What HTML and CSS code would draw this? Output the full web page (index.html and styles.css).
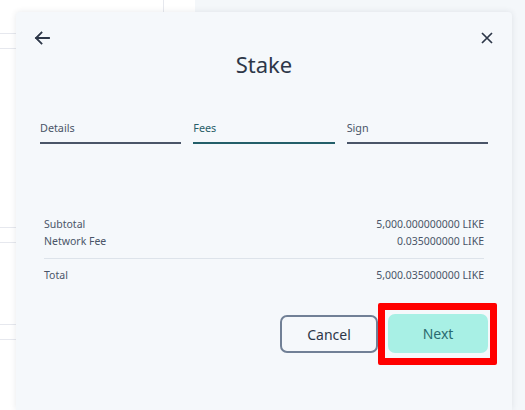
FILE: index.html
```html
<!DOCTYPE html>
<html>
<head>
<meta charset="utf-8">
<link rel="stylesheet" href="styles.css">
</head>
<body>
<div class="app">
  <div class="sidebar">
    <div class="band band-1"></div>
    <div class="band band-2"></div>
    <div class="band band-3"></div>
  </div>
  <div class="gutter"></div>
  <div class="main"></div>
</div>

<div class="modal">
  <div class="modal-head">
    <svg class="icon" width="16" height="14" viewBox="0 0 16 14"><path d="M15 7H2M7.5 1.5L2 7l5.5 5.5" fill="none" stroke="#2d3748" stroke-width="1.8" stroke-linecap="square"/></svg>
    <svg class="icon" width="14" height="14" viewBox="0 0 14 14"><path d="M2 2l10 10M12 2L2 12" fill="none" stroke="#2d3748" stroke-width="1.7"/></svg>
  </div>
  <h1 class="title">Stake</h1>
  <div class="tabs">
    <div class="tab">Details</div>
    <div class="tab tab-active">Fees</div>
    <div class="tab">Sign</div>
  </div>
  <div class="summary">
    <div class="line"><span>Subtotal</span><span>5,000.000000000 LIKE</span></div>
    <div class="line"><span>Network Fee</span><span>0.035000000 LIKE</span></div>
    <div class="divider"></div>
    <div class="line"><span>Total</span><span>5,000.035000000 LIKE</span></div>
  </div>
  <div class="actions">
    <button class="btn btn-cancel">Cancel</button>
    <button class="btn btn-next">Next</button>
  </div>
</div>
<div class="highlight"></div>
</body>
</html>
```
FILE: styles.css
```css
html, body {
  margin: 0;
  padding: 0;
  width: 525px;
  height: 410px;
  overflow: hidden;
  font-family: "Noto Sans", "Open Sans", sans-serif;
}
.app {
  display: flex;
  height: 410px;
}
.sidebar {
  width: 163px;
  border-right: 1px solid #e6e8ee;
  background: #fff;
  display: flex;
  flex-direction: column;
}
.band {
  height: 14px;
  border-top: 1px solid #e6e8ee;
  border-bottom: 1px solid #e6e8ee;
}
.band-1 { margin-top: 33px; }
.band-2 { margin-top: 178px; }
.band-3 { margin-top: 81px; }
.gutter {
  width: 31px;
  background: #fff;
}
.main {
  flex: 1;
  background: #f4f7fa;
}
.modal {
  position: absolute;
  left: 16px;
  top: 12px;
  width: 496px;
  height: 398px;
  overflow: hidden;
  box-sizing: border-box;
  padding: 0 24px;
  background: #f5f8fb;
  border-radius: 4px 4px 0 0;
  box-shadow: 0 0 6px rgba(30, 40, 60, 0.10);
  display: flex;
  flex-direction: column;
}
.modal-head {
  display: flex;
  justify-content: space-between;
  align-items: center;
  height: 14px;
  margin: 19px -6px 0 -6px;
}
.icon { display: block; }
.title {
  margin: 4px 0 0;
  text-align: center;
  font-weight: 400;
  font-size: 22px;
  line-height: 30px;
  color: #2d3748;
}
.tabs {
  display: grid;
  grid-template-columns: 1fr 1fr 1fr;
  gap: 12px;
  margin-top: 41px;
}
.tab {
  font-size: 10.8px;
  line-height: 16px;
  color: #4a5568;
  padding-bottom: 6px;
  border-bottom: 2px solid #4a5568;
}
.tab-active {
  color: #285e68;
  border-bottom-color: #235f69;
}
.summary {
  margin-top: 72px;
  padding: 0 4px;
  display: flex;
  flex-direction: column;
}
.line {
  display: flex;
  justify-content: space-between;
  font-size: 10.5px;
  line-height: 17px;
  color: #4a5568;
}
.divider {
  height: 1px;
  background: #dde3ea;
  margin: 8px 0 8px;
}
.actions {
  display: flex;
  justify-content: flex-end;
  gap: 10px;
  margin-top: 31px;
}
.btn {
  font-family: inherit;
  font-size: 14px;
  border-radius: 7px;
  cursor: pointer;
}
.btn-cancel {
  width: 98px;
  height: 38px;
  border: 2px solid #718096;
  background: transparent;
  color: #2d3748;
}
.btn-next {
  width: 100px;
  height: 39px;
  margin-top: -1px;
  border: none;
  background: #a8f0e5;
  color: #2a6b70;
  font-weight: 400;
}
.highlight {
  position: absolute;
  left: 378px;
  top: 303px;
  width: 119px;
  height: 62px;
  box-sizing: border-box;
  border: 7px solid #ff0000;
  border-radius: 2px;
}
```
